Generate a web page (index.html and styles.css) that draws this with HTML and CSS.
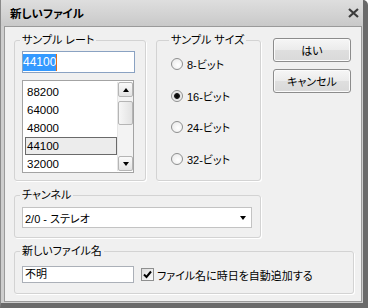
FILE: index.html
```html
<!DOCTYPE html>
<html lang="ja">

<head>
  <meta charset="UTF-8">
  <title>新しいファイル</title>
  <link rel="stylesheet" href="styles.css">
</head>

<body>
  <div class="window">
    <div class="titlebar">
      <span class="title">新しいファイル</span>
      <svg class="close" width="11" height="10" viewBox="0 0 11 10">
        <path d="M1 1 L10 9 M10 1 L1 9" stroke="#3c3c3c" stroke-width="2.2" fill="none" />
      </svg>
    </div>
    <div class="client">
      <div class="top-row">
        <fieldset class="group rate">
          <legend>サンプル レート</legend>
          <div class="textbox focused"><span class="sel">44100</span><span class="caret"></span></div>
          <div class="listbox">
            <ul class="items">
              <li>88200</li>
              <li>64000</li>
              <li>48000</li>
              <li class="current">44100</li>
              <li>32000</li>
            </ul>
            <div class="scrollbar">
              <div class="sb-btn"><span class="arrow-up"></span></div>
              <div class="sb-track">
                <div class="sb-thumb"></div>
              </div>
              <div class="sb-btn"><span class="arrow-down"></span></div>
            </div>
          </div>
        </fieldset>
        <fieldset class="group size">
          <legend>サンプル サイズ</legend>
          <label class="radio"><span class="circle"></span>8-ビット</label>
          <label class="radio"><span class="circle checked"></span>16-ビット</label>
          <label class="radio"><span class="circle"></span>24-ビット</label>
          <label class="radio"><span class="circle"></span>32-ビット</label>
        </fieldset>
        <div class="buttons">
          <button class="btn">はい</button>
          <button class="btn">キャンセル</button>
        </div>
      </div>
      <fieldset class="group channel">
        <legend>チャンネル</legend>
        <div class="combo">
          <span>2/0 - ステレオ</span>
          <span class="arrow-down"></span>
        </div>
      </fieldset>
      <fieldset class="group filename">
        <legend>新しいファイル名</legend>
        <div class="name-row">
          <div class="textbox name">不明</div>
          <span class="checkbox">
            <svg width="11" height="11" viewBox="0 0 11 11">
              <path d="M2 5.5 L4.5 8 L9 2.5" stroke="#000" stroke-width="2" fill="none" />
            </svg>
          </span>
          <span class="check-label">ファイル名に時日を自動追加する</span>
        </div>
      </fieldset>
    </div>
  </div>
</body>

</html>
```

FILE: styles.css
```css
* {
  box-sizing: border-box;
  margin: 0;
  padding: 0;
}

html,
body {
  width: 368px;
  height: 308px;
  overflow: hidden;
}

body {
  font-family: "Liberation Sans", "Noto Sans CJK JP", sans-serif;
  font-size: 11px;
  font-feature-settings: "palt";
  color: #000;
}

.window {
  width: 368px;
  height: 308px;
  display: flex;
  flex-direction: column;
  background: #cdcdcd;
  border-left: 1px solid #8a8a8a;
  border-right: 5px solid #6a6a6a;
  border-bottom: 5px solid #6a6a6a;
  border-top-right-radius: 5px;
}

.titlebar {
  height: 26px;
  display: flex;
  align-items: center;
  justify-content: space-between;
  padding: 0 4px 0 9px;
  background: linear-gradient(#dedede, #c9c9c9);
}

.title {
  font-weight: bold;
  font-size: 11.5px;
  line-height: 16px;
  padding-top: 1px;
}

.client {
  flex: 1;
  margin: 0 1px 1px 3px;
  border: 1px solid #9a9a9a;
  background: #f0f0f0;
  padding: 6px 7px 7px 9px;
}

.top-row {
  display: flex;
  align-items: flex-start;
}

.group {
  border: 1px solid #d3d3d3;
  border-radius: 3px;
  box-shadow: 1px 1px 0 #fff;
}

.group legend {
  padding: 0 2px;
  margin-left: -2px;
  height: 14px;
  line-height: 14px;
  background: #f0f0f0;
}

.rate {
  width: 132px;
  height: 148px;
  padding: 4px 7px 0;
}

.textbox {
  background: #fff;
  border: 1px solid #abb0b8;
}

.focused {
  width: 113px;
  height: 22px;
  border-color: #8aa2c2;
  display: flex;
  align-items: center;
}

.sel {
  background: #3399ff;
  color: #fff;
  line-height: 17px;
  font-size: 12px;
}

.caret {
  width: 1px;
  height: 17px;
  background: #e0701a;
}

.listbox {
  margin-top: 7px;
  width: 112px;
  height: 93px;
  border: 1px solid #a3a3a3;
  background: #fff;
  display: flex;
  padding: 1px 0;
}

.items {
  flex: 1;
  list-style: none;
  padding: 1px 0 0 2px;
  overflow: hidden;
}

.items li {
  height: 18px;
  line-height: 16px;
  padding-left: 1px;
  border: 1px solid transparent;
  font-size: 11.5px;
}

.items .current {
  border-color: #6a6a6a;
  background: #ececec;
}

.scrollbar {
  width: 16px;
  display: flex;
  flex-direction: column;
  background: #f3f3f3;
  border-left: 1px solid #e6e6e6;
}

.sb-btn {
  height: 15px;
  display: flex;
  align-items: center;
  justify-content: center;
  border: 1px solid #b5b5b5;
  border-radius: 2px;
  background: linear-gradient(#fafafa, #e3e3e3);
}

.sb-track {
  flex: 1;
  padding-top: 4px;
}

.sb-thumb {
  height: 24px;
  border: 1px solid #b5b5b5;
  border-radius: 2px;
  background: linear-gradient(90deg, #f6f6f6, #e2e2e2);
}

.arrow-up,
.arrow-down {
  width: 0;
  height: 0;
  border-left: 3.5px solid transparent;
  border-right: 3.5px solid transparent;
}

.arrow-up {
  border-bottom: 4px solid #000;
}

.arrow-down {
  border-top: 4px solid #000;
}

.size {
  width: 105px;
  height: 148px;
  margin-left: 10px;
  padding: 1px 0 0 14px;
}

.radio {
  height: 31.7px;
  display: flex;
  align-items: center;
}

.circle {
  width: 12px;
  height: 12px;
  margin-right: 4px;
  border: 1px solid #8e8f8f;
  border-radius: 50%;
  background: radial-gradient(circle at 60% 60%, #ffffff, #e6e6e6);
}

.circle.checked {
  background: radial-gradient(circle, #000 0, #1a1a1a 2.5px, #dcdcdc 3.3px, #f4f4f4 5px);
}

.buttons {
  margin-left: 12px;
  margin-top: 5px;
  display: flex;
  flex-direction: column;
  gap: 7px;
}

.btn {
  width: 78px;
  height: 24px;
  font: inherit;
  border: 1px solid #8c8c8c;
  border-radius: 3px;
  background: linear-gradient(#f6f6f6, #ebebeb 50%, #dfdfdf 51%, #d9d9d9);
  box-shadow: inset 0 0 0 1px #fbfbfb;
}

.channel {
  width: 247px;
  height: 50px;
  margin-top: 7px;
  padding: 5px 8px 0 7px;
}

.combo {
  width: 230px;
  height: 21px;
  border: 1px solid #c3c3c3;
  background: #fff;
  display: flex;
  align-items: center;
  justify-content: space-between;
  padding: 0 5px 0 2px;
}

.filename {
  width: 340px;
  height: 50px;
  margin-top: 6px;
  padding: 8px 7px 0;
}

.name-row {
  display: flex;
  align-items: center;
}

.name {
  width: 112px;
  height: 17px;
  line-height: 15px;
  padding-left: 2px;
}

.checkbox {
  width: 13px;
  height: 13px;
  margin-left: 7px;
  margin-right: 3px;
  display: flex;
  align-items: center;
  justify-content: center;
  border: 1px solid #8e8f8f;
  background: linear-gradient(135deg, #dcdcdc, #fbfbfb);
}
```
